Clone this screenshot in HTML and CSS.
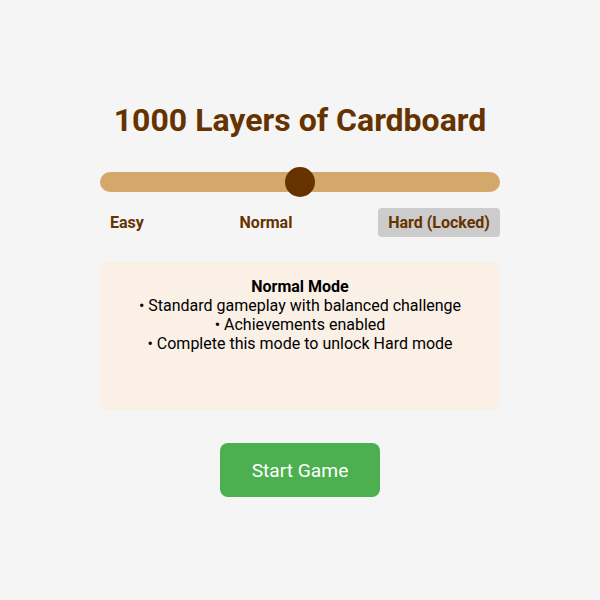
FILE: index.html
```html
<!DOCTYPE html>
<html lang="en">
<head>
<meta charset="utf-8">
<title>1000 Layers of Cardboard</title>
<link rel="stylesheet" href="styles.css">
</head>
<body>
<main class="screen">
  <h1 class="title">1000 Layers of Cardboard</h1>
  <div class="slider">
    <div class="track"></div>
    <div class="thumb"></div>
  </div>
  <div class="labels">
    <span class="label">Easy</span>
    <span class="label">Normal</span>
    <span class="label locked">Hard (Locked)</span>
  </div>
  <div class="info">
    <strong class="info-title">Normal Mode</strong>
    <span>• Standard gameplay with balanced challenge</span>
    <span>• Achievements enabled</span>
    <span>• Complete this mode to unlock Hard mode</span>
  </div>
  <button class="start">Start Game</button>
</main>
</body>
</html>
```
FILE: styles.css
```css
html, body {
  margin: 0;
  padding: 0;
  height: 100%;
}
body {
  background: #f5f5f5;
  font-family: Roboto, "Liberation Sans", sans-serif;
}
.screen {
  box-sizing: border-box;
  height: 600px;
  padding-bottom: 2px;
  display: flex;
  flex-direction: column;
  align-items: center;
  justify-content: center;
}
.title {
  margin: 0;
  font-size: 32px;
  line-height: 38px;
  font-weight: 700;
  color: #663300;
}
.slider {
  position: relative;
  width: 400px;
  height: 30px;
  margin-top: 28px;
  display: flex;
  align-items: center;
}
.track {
  width: 100%;
  height: 20px;
  border-radius: 10px;
  background: #d4a76a;
}
.thumb {
  position: absolute;
  left: 185px;
  top: 0;
  width: 30px;
  height: 30px;
  border-radius: 50%;
  background: #663300;
}
.labels {
  width: 400px;
  margin-top: 11px;
  display: flex;
  justify-content: space-between;
}
.label {
  padding: 5px 10px;
  font-size: 16px;
  line-height: 19px;
  font-weight: 700;
  color: #663300;
  border-radius: 4px;
}
.label.locked {
  background: #cccccc;
}
.info {
  box-sizing: border-box;
  width: 400px;
  height: 148px;
  margin-top: 25px;
  padding: 15px;
  background: #faf0e6;
  border-radius: 8px;
  display: flex;
  flex-direction: column;
  align-items: center;
  font-size: 16px;
  line-height: 19px;
  color: #000000;
  text-align: center;
}
.info-title {
  font-weight: 700;
}
.start {
  margin-top: 33px;
  width: 160px;
  height: 54px;
  border: none;
  border-radius: 8px;
  background: #4caf50;
  color: #ffffff;
  font-family: Roboto, "Liberation Sans", sans-serif;
  font-size: 19.2px;
}
```
